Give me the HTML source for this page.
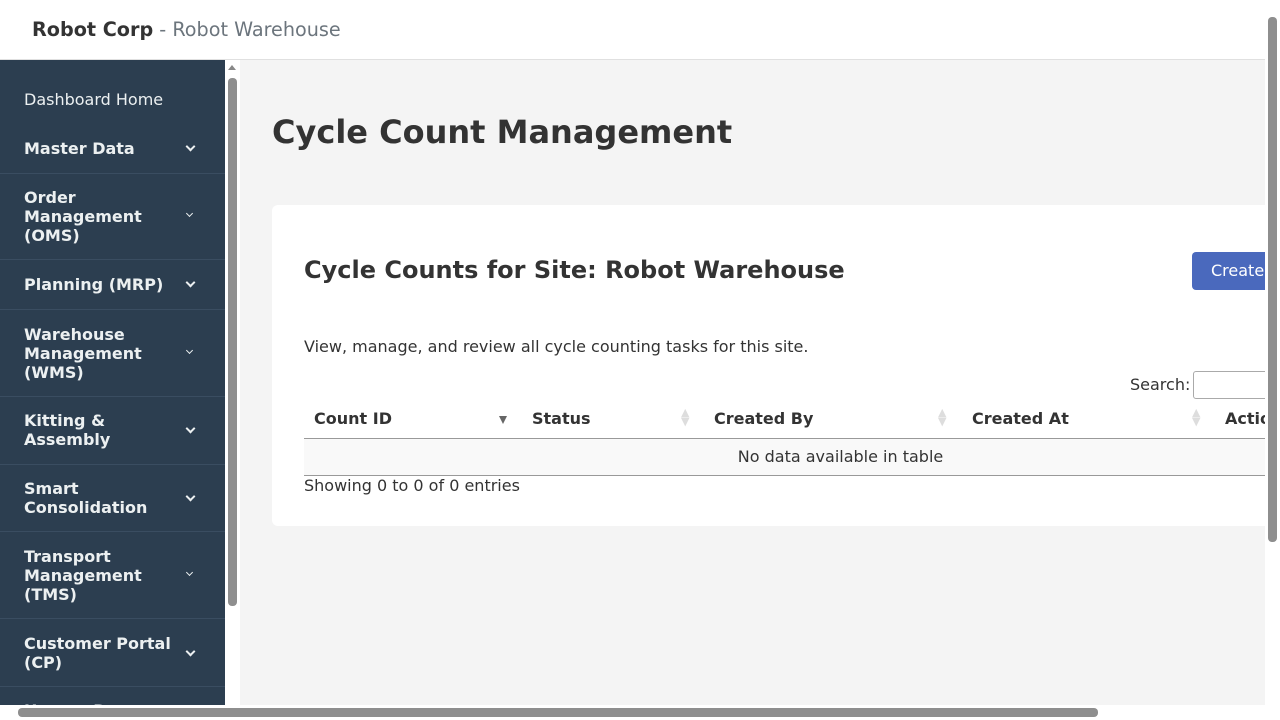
<!DOCTYPE html>
<html><head><meta charset="utf-8"><style>
*{margin:0;padding:0;box-sizing:border-box}
body{width:1280px;height:720px;overflow:hidden;background:#f4f4f4;font-family:"DejaVu Sans","Liberation Sans",sans-serif;color:#333;position:relative}
.hdr{position:absolute;left:0;top:0;width:1265px;height:60px;background:#fff;border-bottom:1px solid #e0e0e0}
.hdr span{position:absolute;left:32px;top:18px;font-size:19.2px}
.side{position:absolute;left:0;top:60px;width:225px;height:645px;background:#2c3e50;overflow:hidden;color:#ecf0f1}
.it{position:absolute;left:0;width:225px;border-bottom:1px solid #3a4d61}
.it b{position:absolute;left:24px;font-size:16px;line-height:19px;font-weight:bold}
.it i{position:absolute;left:187px;width:7px;height:7px;border-right:2px solid #ecf0f1;border-bottom:2px solid #ecf0f1;transform:rotate(45deg)}
.sb{position:absolute;background:#8e8e8e;border-radius:4px}
.abs{position:absolute}
</style></head><body>
<div class="hdr"><span><b>Robot Corp</b> <span style="position:static;color:#6c757d">- Robot Warehouse</span></span></div>
<div class="side">
<div class="abs" style="left:24px;top:30px;font-size:16px">Dashboard Home</div>
<div class="it" style="top:65px;height:49px"><b style="top:14px">Master Data</b><i style="top:18px"></i></div>
<div class="it" style="top:114px;height:86px"><b style="top:14px">Order<br>Management<br>(OMS)</b><i style="top:37px;width:5px;height:5px;border-width:1.5px"></i></div>
<div class="it" style="top:200px;height:50px"><b style="top:15px">Planning (MRP)</b><i style="top:19px"></i></div>
<div class="it" style="top:250px;height:87px"><b style="top:15px">Warehouse<br>Management<br>(WMS)</b><i style="top:38px;width:5px;height:5px;border-width:1.5px"></i></div>
<div class="it" style="top:337px;height:68px"><b style="top:14px">Kitting &amp;<br>Assembly</b><i style="top:28px"></i></div>
<div class="it" style="top:405px;height:67px"><b style="top:14px">Smart<br>Consolidation</b><i style="top:28px"></i></div>
<div class="it" style="top:472px;height:87px"><b style="top:15px">Transport<br>Management<br>(TMS)</b><i style="top:38px;width:5px;height:5px;border-width:1.5px"></i></div>
<div class="it" style="top:559px;height:68px"><b style="top:15px">Customer Portal<br>(CP)</b><i style="top:29px"></i></div>
<div class="it" style="top:627px;height:60px;border:0"><b style="top:14px">Human Resources</b></div>
</div>
<div class="abs" style="left:225px;top:60px;width:15px;height:645px;background:#fff"></div>
<div class="sb" style="left:228px;top:78px;width:9px;height:528px"></div>
<div class="abs" style="left:228px;top:65px;border:4px solid transparent;border-bottom:5px solid #888;border-top:0"></div>
<div class="abs" style="left:272px;top:113px;font-size:32px;font-weight:bold">Cycle Count Management</div>
<div class="abs" style="left:272px;top:205px;width:1000px;height:321px;background:#fff;border-radius:6px"></div>
<div class="abs" style="left:304px;top:256px;font-size:24px;font-weight:bold">Cycle Counts for Site: Robot Warehouse</div>
<div class="abs" style="left:1192px;top:252px;width:90px;height:38px;background:#4a69bd;border-radius:4px;color:#fff;font-size:16px;padding:9px 0 0 19px">Create</div>
<div class="abs" style="left:304px;top:337px;font-size:16px">View, manage, and review all cycle counting tasks for this site.</div>
<div class="abs" style="left:1130px;top:375px;font-size:16px">Search:</div>
<div class="abs" style="left:1193px;top:371px;width:90px;height:28px;border:1px solid #aaa;border-radius:3px;background:#fff"></div>
<div class="abs" style="left:304px;top:400px;width:970px;height:39px;border-bottom:1px solid #999;font-size:16px;font-weight:bold">
<span class="abs" style="left:10px;top:9px">Count ID</span>
<span class="abs" style="left:228px;top:9px">Status</span>
<span class="abs" style="left:410px;top:9px">Created By</span>
<span class="abs" style="left:668px;top:9px">Created At</span>
<span class="abs" style="left:921px;top:9px">Actions</span>
<span class="abs" style="left:195px;top:16px;border:4.5px solid transparent;border-top:8px solid #666;border-bottom:0"></span>
<span class="abs" style="left:377px;top:8px;color:#ddd;font-size:11px;line-height:9px">▲<br>▼</span>
<span class="abs" style="left:634px;top:8px;color:#ddd;font-size:11px;line-height:9px">▲<br>▼</span>
<span class="abs" style="left:888px;top:8px;color:#ddd;font-size:11px;line-height:9px">▲<br>▼</span>
</div>
<div class="abs" style="left:304px;top:439px;width:970px;height:37px;background:#f9f9f9;border-bottom:1px solid #999;font-size:16px;text-align:center;padding-top:8px;padding-left:103px">No data available in table</div>
<div class="abs" style="left:304px;top:476px;font-size:16px">Showing 0 to 0 of 0 entries</div>
<div class="abs" style="left:1265px;top:0;width:15px;height:705px;background:#fff"></div>
<div class="sb" style="left:1268px;top:17px;width:9px;height:525px"></div>
<div class="abs" style="left:0;top:705px;width:1280px;height:15px;background:#fff"></div>
<div class="sb" style="left:18px;top:708px;width:1080px;height:9px"></div>
</body></html>
